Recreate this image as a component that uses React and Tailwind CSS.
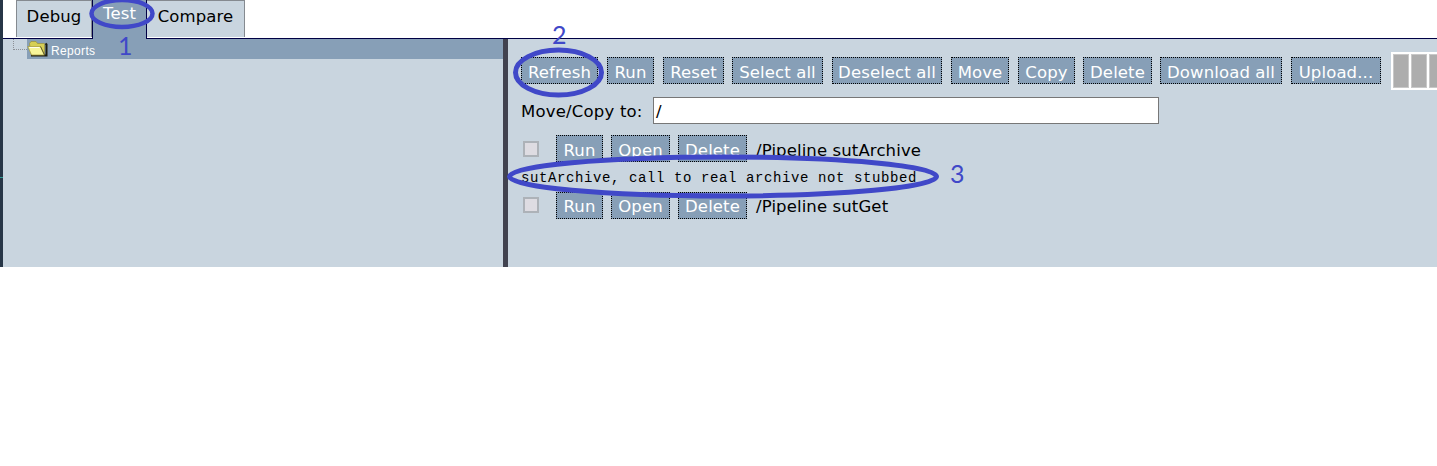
const btn =
  'box-border flex h-[27px] shrink-0 items-center justify-center whitespace-nowrap border border-dotted border-black bg-[#879fb7] text-white';

const actions = [
  ['Refresh', 'w-[77px] mr-[9px]'],
  ['Run', 'w-[47px] mr-[9px]'],
  ['Reset', 'w-[61px] mr-[8px]'],
  ['Select all', 'w-[91px] mr-[9px]'],
  ['Deselect all', 'w-[110px] mr-[9px]'],
  ['Move', 'w-[58px] mr-[9px]'],
  ['Copy', 'w-[57px] mr-[8px]'],
  ['Delete', 'w-[69px] mr-[8px]'],
  ['Download all', 'w-[122px] mr-[9px]'],
  ['Upload...', 'w-[90px] mr-[10px]'],
];

function ReportRow({ name, pad, box }) {
  return (
    <div className="flex h-[27px] items-center">
      <span className={`ml-[2px] mr-[17px] h-4 w-4 shrink-0 border-2 border-[#adb2b8] bg-[#dedce2] ${box}`} />
      <span className={`${btn} ${pad} mr-2 w-[47px]`}>Run</span>
      <span className={`${btn} ${pad} mr-2 w-[59px]`}>Open</span>
      <span className={`${btn} ${pad} mr-[9px] w-[69px]`}>Delete</span>
      <span className={`whitespace-nowrap ${pad}`}>{name}</span>
    </div>
  );
}

function Folder() {
  return (
    <svg className="-mt-[2px] h-[17px] w-[21px] shrink-0" viewBox="0 0 21 17">
      <path d="M4 15.5h15.5V4.5l-1-1" fill="none" stroke="#1d1d10" strokeWidth="2" />
      <path d="M2.5 3.5 4 1.5h5l1.5 2h7V14H4z" fill="#d6cf55" stroke="#99913a" strokeWidth=".7" />
      <path d="M.8 6.5h12.7l4 8.5H4.5z" fill="#f7f59a" stroke="#aaa044" strokeWidth=".8" />
      <path d="M2.5 7.5h10" stroke="#fffff0" strokeWidth="1" />
      <path d="m13.5 6.5 4 8.5" stroke="#4d481c" strokeWidth=".8" />
    </svg>
  );
}

export default function App() {
  return (
    <div className="relative h-[466px] w-[1437px] overflow-hidden bg-white font-['DejaVu_Sans',Verdana,sans-serif] text-[16.5px] leading-5 tracking-[0.12px] text-black">
      <div className="flex h-[267px]">
        <div className="w-[3px] shrink-0 bg-[#273647]">
          <div className="mt-[177px] h-px bg-[#2f9b93]" />
        </div>
        <div className="flex min-w-0 flex-1 flex-col">
          <nav className="flex h-[39px] shrink-0 items-start border-b border-[#000045] pl-[13px]">
            <div className="flex h-[37px] w-[76px] justify-center border border-b-0 border-[#858a90] bg-[#c9d5df] pt-[6px]">Debug</div>
            <div className="flex h-[39px] w-[55px] justify-center border-x border-[#000045] bg-[#879fb7] pt-[4px] text-white">Test</div>
            <div className="flex h-[37px] w-[98px] justify-center border border-b-0 border-l-0 border-[#858a90] bg-[#c9d5df] pt-[6px]">Compare</div>
          </nav>
          <div className="flex min-h-0 flex-1 bg-[#c9d5df]">
            <aside className="flex w-[500px] shrink-0 items-start">
              <div className="ml-[10px] h-[11px] w-[14px] border-b border-l border-dotted border-[#8c9096]" />
              <div className="flex h-5 flex-1 items-center bg-[#879fb7] font-['Liberation_Sans',sans-serif] text-[12px] tracking-[0.35px] text-white">
                <Folder />
                <span className="ml-[3px] pt-[3px]">Reports</span>
              </div>
            </aside>
            <div className="w-[5px] shrink-0 bg-[#41424f]" />
            <main className="min-w-0 flex-1 overflow-hidden pl-[13px] pt-[13px]">
              <div className="flex h-[38px] items-start">
                {actions.map(([label, size]) => (
                  <span key={label} className={`${btn} mt-[5px] pt-[4px] ${size}`}>{label}</span>
                ))}
                <div className="flex h-[38px] w-[60px] shrink-0 gap-[2px] bg-white p-[2px]">
                  <span className="w-4 shrink-0 border border-[#c8c8c8] bg-[#adadad]" />
                  <span className="w-4 shrink-0 border border-[#c8c8c8] bg-[#adadad]" />
                  <span className="w-4 shrink-0 border border-[#c8c8c8] bg-[#adadad]" />
                </div>
              </div>
              <div className="mt-[7px] flex h-[27px] items-center">
                <span className="w-[132px] shrink-0 whitespace-nowrap pt-[2px] tracking-[0.2px]">Move/Copy to:</span>
                <span className="h-[27px] w-[506px] border border-[#777] bg-white pl-[2px] pt-[4px]">/</span>
              </div>
              <div className="mt-[11px]">
                <ReportRow name="/Pipeline sutArchive" pad="pt-[4px]" box="" />
                <div className="flex h-[30px] items-center whitespace-nowrap pt-px font-['Liberation_Mono',monospace] text-[14px] tracking-[0.6px]">
                  sutArchive, call to real archive not stubbed
                </div>
                <ReportRow name="/Pipeline sutGet" pad="pt-[2px]" box="mb-px" />
              </div>
            </main>
          </div>
        </div>
      </div>
      <svg className="pointer-events-none absolute left-0 top-0 h-[267px] w-[1437px]" fill="none" stroke="#4048c8" viewBox="0 0 1437 267">
        <ellipse cx="122" cy="13.5" rx="30.5" ry="13.5" strokeWidth="4.5" />
        <ellipse cx="558.5" cy="72.5" rx="43" ry="22.5" strokeWidth="5" />
        <ellipse cx="723" cy="176.5" rx="213.5" ry="19.5" strokeWidth="5" />
      </svg>
      <span className="absolute left-[118px] top-[33px] font-['Lato',sans-serif] text-[25px] leading-6 tracking-normal text-[#4048c8]">1</span>
      <span className="absolute left-[552px] top-[22px] font-['Lato',sans-serif] text-[25px] leading-6 tracking-normal text-[#4048c8]">2</span>
      <span className="absolute left-[950px] top-[161px] font-['Lato',sans-serif] text-[25px] leading-6 tracking-normal text-[#4048c8]">3</span>
    </div>
  );
}
